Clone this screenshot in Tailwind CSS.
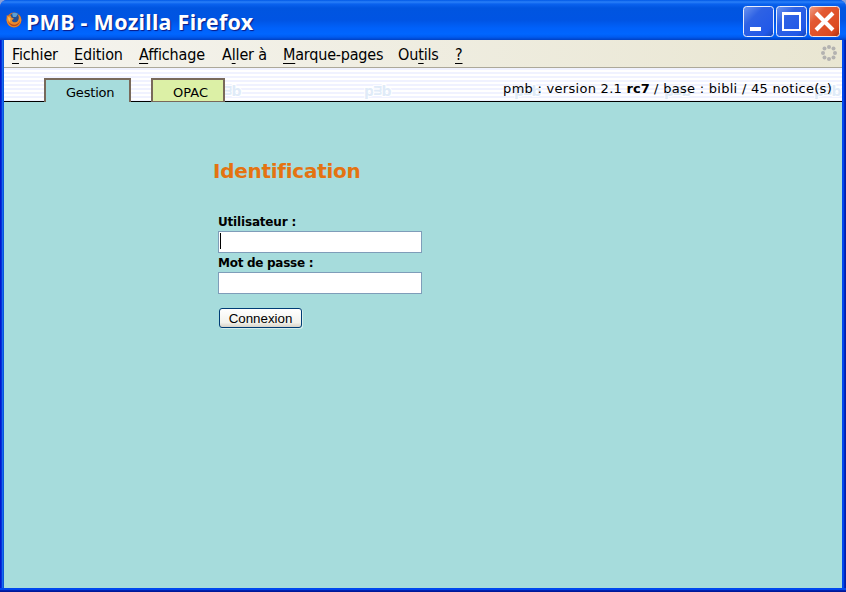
<!DOCTYPE html>
<html lang="fr">
<head>
<meta charset="utf-8">
<title>PMB - Mozilla Firefox</title>
<script src="https://cdn.jsdelivr.net/npm/@tailwindcss/browser@4"></script>
</head>
<body class="w-[846px] h-[592px] overflow-hidden bg-[#8aa0d8] text-black">
<div class="w-[846px] h-[592px] flex flex-col rounded-t-[7px] overflow-hidden bg-[#0047e6]">
  <header class="h-10 shrink-0 flex items-center pl-[6px] pr-[6px] bg-[linear-gradient(to_bottom,#0058e6_0px,#2a80f8_2px,#0a62ee_4px,#0055e0_8px,#0054e3_20px,#0061fa_28px,#0066ff_34px,#005bf0_37px,#0041c4_40px)]">
    <svg class="size-4 shrink-0" viewBox="0 0 16 16">
      <circle cx="8" cy="8" r="7.5" fill="#d9701c"/>
      <circle cx="8.8" cy="6.2" r="5.4" fill="#244f94"/>
      <path d="M6 1.5Q9 0 12 2L10 5 7 5Z" fill="#5b9fd6"/>
      <path d="M.8 3L2.4 4.2 5 3.6 5.2 5.2 8 6.8 6 8Q6 10.5 9.5 10.3 13 9.5 12.8 5L11.8 2.6Q15.2 4.5 15.2 8.5 14 14.5 8 15.2 1.8 14.5.6 8.5Z" fill="#e98a2d"/>
      <path d="M2 9Q5 13.5 10 12.6 13 11.5 14 8.5 13.5 13.5 8 14.3 3 13.5 2 9" fill="#b9471c"/>
      <path d="M2 5Q1.8 8 4 10L4.5 6Z" fill="#f6bd55"/>
    </svg>
    <h1 class="ml-[4px] mt-[3px] font-['Noto_Sans'] font-bold text-[21.5px] leading-[30px] tracking-[0.27px] text-white whitespace-nowrap [text-shadow:1px_1px_1px_#0a1883]">PMB - Mozilla Firefox</h1>
    <div class="ml-auto mt-[3px] flex gap-[2px]">
      <svg class="w-[31px] h-[31px]" viewBox="0 0 31 31">
        <defs>
          <linearGradient id="blue" x1="0" y1="0" x2="1" y2="1"><stop offset="0" stop-color="#6d96f0"/><stop offset=".35" stop-color="#2e62e4"/><stop offset=".8" stop-color="#2259e8"/><stop offset="1" stop-color="#1244b8"/></linearGradient>
          <linearGradient id="red" x1="0" y1="0" x2="1" y2="1"><stop offset="0" stop-color="#f0a088"/><stop offset=".3" stop-color="#e35a33"/><stop offset=".8" stop-color="#dc4a20"/><stop offset="1" stop-color="#a8300e"/></linearGradient>
        </defs>
        <rect x=".5" y=".5" width="30" height="30" rx="3" fill="url(#blue)" stroke="#e8eefc"/><path d="M7 21h11v4H7z" fill="#fff"/>
      </svg>
      <svg class="w-[31px] h-[31px]" viewBox="0 0 31 31"><rect x=".5" y=".5" width="30" height="30" rx="3" fill="url(#blue)" stroke="#e8eefc"/><path d="M6 6h19v19H6zM8 9v14h15V9z" fill="#fff" fill-rule="evenodd"/></svg>
      <svg class="w-[31px] h-[31px]" viewBox="0 0 31 31"><rect x=".5" y=".5" width="30" height="30" rx="3" fill="url(#red)" stroke="#f6e8e4"/><path d="M7 7L24 24M24 7L7 24" stroke="#fff" stroke-width="4"/></svg>
    </div>
  </header>
  <div class="flex-1 min-h-0 flex">
    <div class="w-1 shrink-0 bg-[linear-gradient(to_right,#0019cf_0px,#0019cf_1px,#0831d9_1px,#0831d9_2px,#166aee_2px,#166aee_3px,#0855dd_3px)]"></div>
    <div class="w-[838px] h-[548px] flex flex-col">
      <nav class="h-7 shrink-0 flex border-b border-[#aca899] bg-[linear-gradient(to_right,#f5f4ef,#e9e6d2)] font-['DejaVu_Sans_Condensed'] text-[16px] leading-[30px] tracking-[-0.15px] whitespace-nowrap [&_u]:underline-offset-[3px] [&_u]:decoration-1">
        <span class="w-[62px] pl-[8px]"><u>F</u>ichier</span>
        <span class="w-[66px] pl-[8px]"><u>E</u>dition</span>
        <span class="w-[82px] pl-[7px]"><u>A</u>ffichage</span>
        <span class="w-[61px] pl-[8px]">A<u>l</u>ler à</span>
        <span class="w-[116px] pl-[8px] tracking-[-0.2px]"><u>M</u>arque-pages</span>
        <span class="w-[57px] pl-[7px]">Ou<u>t</u>ils</span>
        <span class="w-[30px] pl-[7px]"><u>?</u></span>
        <svg class="ml-auto mr-[5px] mt-[5px] size-4" viewBox="0 0 16 16" fill="#b3b2b0"><circle cx="8" cy="2" r="2"/><circle cx="12.5" cy="3.6" r="2"/><circle cx="14" cy="8" r="2"/><circle cx="12.5" cy="12.4" r="2"/><circle cx="8" cy="14" r="2"/><circle cx="3.5" cy="12.4" r="2"/><circle cx="2" cy="8" r="2"/><circle cx="3.5" cy="3.6" r="2"/></svg>
      </nav>
      <div class="relative h-[34px] shrink-0 border-b border-black bg-[repeating-linear-gradient(to_bottom,#f0f2ff_0px,#f0f2ff_2px,#ffffff_2px,#ffffff_4px)]">
        <svg class="absolute inset-0 w-[838px] h-[33px]" viewBox="0 0 838 33">
          <defs>
            <g id="mark" font-family="DejaVu Sans" font-weight="bold" font-size="14" fill="#e0ebf8" stroke="#fff" stroke-width="2" paint-order="stroke">
              <text x="0" y="28">p</text><text transform="translate(9.5,17.2) rotate(90) scale(.72,1)" x="0" y="0">m</text><text x="17.5" y="28">b</text>
            </g>
          </defs>
          <use href="#mark" x="210"/><use href="#mark" x="360"/><use href="#mark" x="510"/><use href="#mark" x="660"/><use href="#mark" x="810"/>
        </svg>
        <div class="relative h-[34px] flex items-end pl-10 font-['DejaVu_Sans'] text-[13px]">
          <a class="w-[87px] h-6 border-2 border-b-0 border-[#78695a] bg-[#a6dcdc] pl-5 pt-[4px] leading-[17px] tracking-[-0.2px]">Gestion</a>
          <a class="ml-5 w-[74px] h-6 border-2 border-b-[1px] border-[#78695a] bg-[#dcf0a6] pl-5 pt-[4px] leading-[17px] tracking-[0px]">OPAC</a>
          <p class="ml-auto mr-[10px] mb-[4px] leading-[18px] tracking-[0.28px] whitespace-nowrap">pmb : version 2.1 <b class="tracking-[0px]">rc7</b> / base : bibli / 45 notice(s)</p>
        </div>
      </div>
      <main class="flex-1 bg-[#a6dcdc] pl-[209px] pt-[57px]">
        <h2 class="font-['DejaVu_Sans'] font-bold text-[20px] leading-[24px] tracking-[-0.27px] text-[#e47311]">Identification</h2>
        <form class="ml-[5px] mt-[31px] flex flex-col items-start font-['DejaVu_Sans']">
          <label class="text-[12px] leading-[17px] font-bold tracking-[-0.18px]">Utilisateur :</label>
          <div class="w-[204px] h-[22px] border border-[#7f9db9] bg-white pl-[1px] pt-[1px]"><div class="w-px h-4 bg-black"></div></div>
          <label class="mt-[1px] text-[12px] leading-[18px] font-bold tracking-[-0.28px]">Mot de passe :</label>
          <div class="w-[204px] h-[22px] border border-[#7f9db9] bg-white"></div>
          <button type="button" class="ml-[1px] mt-[14px] w-[83px] h-[20px] rounded-[3px] border border-[#003c74] bg-[linear-gradient(to_bottom,#ffffff,#f2f2ec_75%,#d8d2c6)] font-['Liberation_Sans'] text-[13.33px] leading-[19px] shadow-[1px_1px_0_#d4edeb]">Connexion</button>
        </form>
      </main>
    </div>
    <div class="w-1 shrink-0 bg-[linear-gradient(to_right,#0047ee_0px,#0047ee_2px,#0030c8_2px,#0019a0_4px)]"></div>
  </div>
  <div class="h-1 shrink-0 bg-[linear-gradient(to_bottom,#0047ee_0px,#0047ee_2px,#0025bb_2px,#00138c_4px)]"></div>
</div>
</body>
</html>
